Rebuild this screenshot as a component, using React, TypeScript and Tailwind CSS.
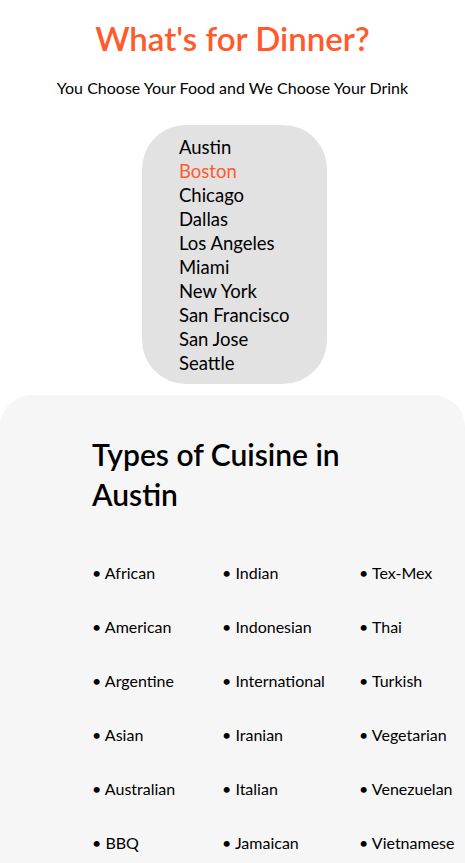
const cities = [
  "Austin",
  "Boston",
  "Chicago",
  "Dallas",
  "Los Angeles",
  "Miami",
  "New York",
  "San Francisco",
  "San Jose",
  "Seattle",
];

const columns = [
  ["African", "American", "Argentine", "Asian", "Australian", "BBQ"],
  ["Indian", "Indonesian", "International", "Iranian", "Italian", "Jamaican"],
  ["Tex-Mex", "Thai", "Turkish", "Vegetarian", "Venezuelan", "Vietnamese"],
];

export default function App() {
  return (
    <div className="min-h-[863px] bg-white font-['Lato',sans-serif] text-black overflow-hidden">
      <header className="flex flex-col items-center pt-[16px]">
        <h1 className="text-[33px] leading-[44px] font-semibold text-[#ff5a2b]">
          What's for Dinner?
        </h1>
        <p className="mt-[18px] text-[16px] leading-5">
          You Choose Your Food and We Choose Your Drink
        </p>
      </header>

      <div className="flex justify-center mt-[27px] pl-[4px]">
        <ul className="w-[185px] h-[259px] rounded-[44px] bg-[#e2e2e2] pt-[10px] pl-[37px]">
          {cities.map((city) => (
            <li
              key={city}
              className={`text-[18.5px] leading-6 ${
                city === "Boston" ? "text-[#ff5a2b]" : "text-black"
              }`}
            >
              {city}
            </li>
          ))}
        </ul>
      </div>

      <section className="mt-[11px] bg-[#f6f6f6] rounded-t-[32px] pt-[39px] pl-[92px] pb-10">
        <h2 className="w-[280px] text-[30px] leading-10 font-semibold">
          Types of Cuisine in Austin
        </h2>
        <div className="mt-[49px] grid grid-cols-[130px_137px_auto]">
          {columns.map((col, i) => (
            <ul key={i} className="flex flex-col">
              {col.map((item) => (
                <li key={item} className="h-[54px] text-[16px] leading-5">
                  • {item}
                </li>
              ))}
            </ul>
          ))}
        </div>
      </section>
    </div>
  );
}
